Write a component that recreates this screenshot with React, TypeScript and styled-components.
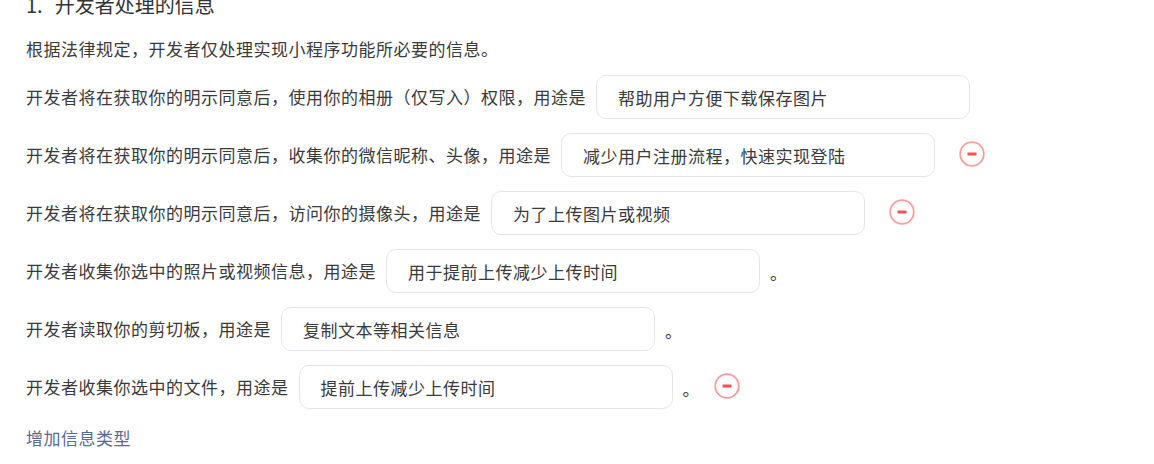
import React from "react";
import styled, { createGlobalStyle } from "styled-components";

const GlobalStyle = createGlobalStyle`
  body {
    margin: 0;
    background: #fff;
    font-family: "Noto Sans CJK SC", "Liberation Sans", sans-serif;
    color: #3a3a3a;
  }
`;

const items = [
  { label: "开发者将在获取你的明示同意后，使用你的相册（仅写入）权限，用途是", value: "帮助用户方便下载保存图片", dot: false, removable: false },
  { label: "开发者将在获取你的明示同意后，收集你的微信昵称、头像，用途是", value: "减少用户注册流程，快速实现登陆", dot: false, removable: true },
  { label: "开发者将在获取你的明示同意后，访问你的摄像头，用途是", value: "为了上传图片或视频", dot: false, removable: true },
  { label: "开发者收集你选中的照片或视频信息，用途是", value: "用于提前上传减少上传时间", dot: true, removable: false },
  { label: "开发者读取你的剪切板，用途是", value: "复制文本等相关信息", dot: true, removable: false },
  { label: "开发者收集你选中的文件，用途是", value: "提前上传减少上传时间", dot: true, removable: true },
];

const RemoveIcon = () => (
  <svg width="26" height="26" viewBox="0 0 26 26">
    <circle cx="13" cy="13" r="11.8" fill="none" stroke="#fb9d9d" strokeWidth="1.8" />
    <rect x="8.5" y="11.5" width="9" height="3" rx="0.5" fill="#fa5151" />
  </svg>
);

const App = () => {
  return (
    <Page>
      <GlobalStyle />
      <Title>
        <span className="num">1.</span>开发者处理的信息
      </Title>
      <Intro>根据法律规定，开发者仅处理实现小程序功能所必要的信息。</Intro>
      <List>
        {items.map((item) => (
          <Row key={item.label}>
            <Label>{item.label}</Label>
            <Field>{item.value}</Field>
            {item.dot && <Dot>。</Dot>}
            {item.removable && (
              <RemoveButton $afterDot={item.dot}>
                <RemoveIcon />
              </RemoveButton>
            )}
          </Row>
        ))}
      </List>
      <AddLink>增加信息类型</AddLink>
    </Page>
  );
};

const Page = styled.div`
  padding: 0 0 0 26px;
  margin-top: -9px;
  font-size: 17px;
  letter-spacing: 0.5px;
`;

const Title = styled.div`
  font-size: 20px;
  line-height: 28px;
  color: #333;
  letter-spacing: 0;
  .num {
    margin-right: 12px;
  }
`;

const Intro = styled.div`
  margin-top: 18px;
  line-height: 24px;
`;

const List = styled.div`
  margin-top: 14px;
  display: flex;
  flex-direction: column;
  gap: 14px;
`;

const Row = styled.div`
  display: flex;
  align-items: center;
  height: 44px;
`;

const Label = styled.span`
  white-space: nowrap;
  line-height: 24px;
`;

const Field = styled.div`
  box-sizing: border-box;
  width: 374px;
  height: 44px;
  margin-left: 10px;
  padding: 0 21px;
  border: 1px solid #e6e6e6;
  border-radius: 10px;
  display: flex;
  align-items: center;
  white-space: nowrap;
`;

const Dot = styled.span`
  margin-left: 10px;
  line-height: 24px;
  margin-top: 4px;
`;

const RemoveButton = styled.div<{ $afterDot: boolean }>`
  margin-left: ${(p) => (p.$afterDot ? "14px" : "24px")};
  width: 26px;
  height: 26px;
  margin-top: -2px;
  cursor: pointer;
  svg {
    display: block;
  }
`;

const AddLink = styled.div`
  margin-top: 17px;
  line-height: 24px;
  color: #576b95;
  cursor: pointer;
`;

export default App;
